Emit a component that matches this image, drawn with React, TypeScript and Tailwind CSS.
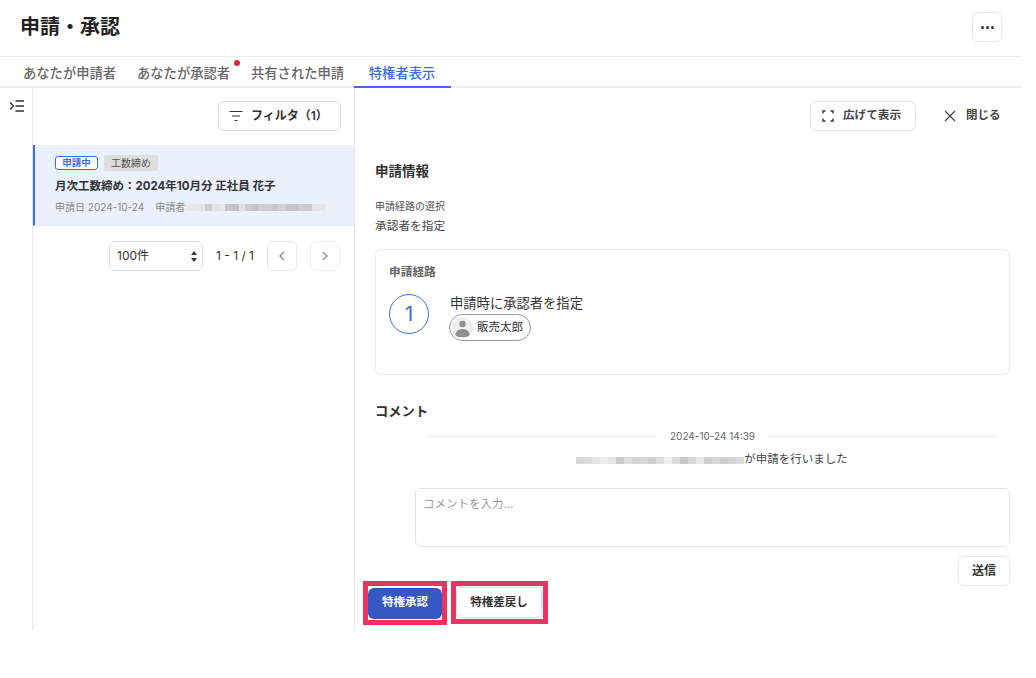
import React from "react";

const blurA = ["#e6e8ee","#e4e7ee","#dfe3ea","#c9ccd3","#dfe3ea","#e3e6ee","#c5c8d0","#c0c3cb","#dde0e8","#c8cbd2","#c2c5cd","#cdd0d8","#cbced5","#c6c9d1","#cfd2da","#c5c8d0","#c3c6ce","#cccfd6","#c8cbd3","#e0e3ea","#e4e7ee"];
const blurB = ["#d9d9d9","#dcdcdc","#e4e4e4","#ececec","#e6e6e6","#c9c9c9","#dedede","#d4d4d4","#d8d8d8","#cfcfcf","#dedede","#f0f0f0","#dcdcdc","#c8c8c8","#d8d8d8","#e8e8e8","#d0d0d0","#d8d8d8","#cccccc","#d4d4d4","#dcdcdc"];

function Blur({ colors, w, h = 7 }: { colors: string[]; w: number; h?: number }) {
  return (
    <span className="inline-flex shrink-0 blur-[0.6px]" style={{ width: w, height: h }}>
      {colors.map((c, i) => (
        <span key={i} className="flex-1" style={{ backgroundColor: c }} />
      ))}
    </span>
  );
}

function Chevron({ dir, color }: { dir: "l" | "r"; color: string }) {
  return (
    <svg width="12" height="12" viewBox="0 0 12 12" fill="none" stroke={color} strokeWidth="1.4">
      <path d={dir === "l" ? "M8 2 L4 6 L8 10" : "M4 2 L8 6 L4 10"} />
    </svg>
  );
}

export default function App() {
  return (
    <div className="w-[1036px] h-[678px] bg-white overflow-hidden text-[#333] font-['Inter','Noto_Sans_CJK_JP',sans-serif]">
      <div className="w-[1022px]">
        <header className="h-[57px] border-b border-[#eeeeee] flex items-center justify-between pl-5 pr-5">
          <h1 className="text-[20px] leading-7 font-bold text-[#222] -mt-[2px]">申請・承認</h1>
          <button className="w-[30px] h-[30px] mb-[2px] border border-[#e4e4e4] rounded-md flex items-center justify-center gap-[2px]">
            <span className="w-[3px] h-[3px] rounded-full bg-[#333]" />
            <span className="w-[3px] h-[3px] rounded-full bg-[#333]" />
            <span className="w-[3px] h-[3px] rounded-full bg-[#333]" />
          </button>
        </header>

        <nav className="h-[31px] border-b-2 border-[#eeeeee] flex pl-[23px] text-[13.3px] font-medium text-[#666]">
          <span className="leading-[32px] w-[114px]">あなたが申請者</span>
          <span className="leading-[32px] w-[114px] relative">
            あなたが承認者
            <span className="absolute left-[97px] top-[3px] w-[6px] h-[6px] rounded-full bg-[#d32f3a]" />
          </span>
          <span className="leading-[32px] w-[103px]">共有された申請</span>
          <span className="w-[97px] h-[31px] border-b-2 border-[#3b6ce8] text-[#3b6ce8] leading-[32px] text-center pr-[1px]">特権者表示</span>
        </nav>

        <div className="flex h-[542px]">
          <aside className="w-[33px] shrink-0 border-r border-[#e8e8e8] pl-[9px] pt-[12px]">
            <svg width="16" height="12" viewBox="0 0 16 12" fill="none" stroke="#333" strokeWidth="1.3">
              <path d="M1 2.5 L4.5 6 L1 9.5" />
              <path d="M6.5 1 H15 M6.5 6 H15 M6.5 11 H15" />
            </svg>
          </aside>

          <section className="w-[322px] shrink-0 border-r border-[#e8e8e8]">
            <div className="h-[57px] pt-[13px] pr-[13px] flex justify-end">
              <button className="w-[123px] h-[30px] border border-[#dddddd] rounded-md flex items-center pl-[10px] text-[12px] font-semibold text-[#333]">
                <svg width="14" height="12" viewBox="0 0 14 12" fill="none" stroke="#333" strokeWidth="1.2" className="mr-[8px]">
                  <path d="M0.5 1.5 H13.5 M3 6 H11 M5.5 10.5 H8.5" />
                </svg>
                フィルタ（1）
              </button>
            </div>
            <div className="h-[81px] bg-[#eaf1fd] border-l-2 border-[#3b6ce8] border-b border-b-[#e6e9f0] pl-[20px] pt-[10px]">
              <div className="flex items-center gap-[6px] h-[16px]">
                <span className="w-[43px] h-[14px] border border-[#3b6ce8] rounded-[3px] bg-white text-[#3b6ce8] text-[9.5px] font-semibold leading-[12px] text-center">申請中</span>
                <span className="w-[54px] h-[16px] bg-[#dedede] rounded-[2px] text-[#555] text-[10px] leading-[16px] text-center">工数締め</span>
              </div>
              <div className="mt-[5px] text-[11.5px] leading-[20px] font-bold text-[#333]">月次工数締め：2024年10月分 正社員 花子</div>
              <div className="mt-[3px] flex items-center text-[10px] leading-[16px] text-[#888]">
                <span>申請日 2024-10-24</span>
                <span className="ml-[11px]">申請者</span>
                <Blur colors={blurA} w={140} />
              </div>
            </div>
            <div className="flex items-center pt-[15px] pl-[76px]">
              <div className="w-[94px] h-[30px] border border-[#dddddd] rounded-md flex items-center justify-between pl-[7px] pr-[5px] text-[12px] text-[#333]">
                100件
                <svg width="6" height="11" viewBox="0 0 6 11" fill="#333"><path d="M3 0 L6 4 H0 Z M3 11 L0 7 H6 Z" /></svg>
              </div>
              <span className="ml-[13px] w-[38px] text-[12px] text-[#333] whitespace-nowrap">1 - 1 / 1</span>
              <button className="ml-[13px] w-[30px] h-[30px] border border-[#e8e8e8] rounded-md flex items-center justify-center"><Chevron dir="l" color="#888" /></button>
              <button className="ml-[13px] w-[30px] h-[30px] border border-[#eeeeee] rounded-md flex items-center justify-center"><Chevron dir="r" color="#999" /></button>
            </div>
          </section>

          <main className="flex-1 min-w-0 pl-[20px] pr-[12px] relative">
            <div className="h-[43px] pt-[13px] flex justify-end items-start">
              <button className="w-[106px] h-[30px] border border-[#e4e4e4] rounded-md flex items-center pl-[11px] text-[11.6px] font-semibold text-[#444]">
                <svg width="12" height="12" viewBox="0 0 12 12" fill="none" stroke="#333" strokeWidth="1.4" className="mr-[9px]">
                  <path d="M1 3.5 V1 H3.5 M8.5 1 H11 V3.5 M11 8.5 V11 H8.5 M3.5 11 H1 V8.5" />
                </svg>
                広げて表示
              </button>
              <div className="ml-[28px] mr-[10px] w-[56px] h-[30px] flex items-center text-[11.5px] font-semibold text-[#444] whitespace-nowrap">
                <svg width="12" height="12" viewBox="0 0 12 12" fill="none" stroke="#444" strokeWidth="1.2" className="mr-[10px] shrink-0">
                  <path d="M1 1 L11 11 M11 1 L1 11" />
                </svg>
                閉じる
              </div>
            </div>

            <h2 className="mt-[30px] text-[13.5px] leading-5 font-bold text-[#333]">申請情報</h2>
            <p className="mt-[17px] text-[10px] leading-4 text-[#555]">申請経路の選択</p>
            <p className="mt-[2px] text-[11.7px] leading-5 text-[#444]">承認者を指定</p>

            <div className="mt-[13px] h-[126px] border border-[#e9e9e9] rounded-md pl-[13px] pt-[12px]">
              <div className="text-[11.7px] leading-5 font-semibold text-[#666]">申請経路</div>
              <div className="mt-[12px] flex">
                <div className="w-[40px] h-[40px] rounded-full border border-[#3b6ce8] text-[#3b6ce8] text-[20px] flex items-center justify-center">1</div>
                <div className="ml-[20px] -mt-[1px]">
                  <div className="text-[13.3px] leading-5 text-[#333] pl-[1px]">申請時に承認者を指定</div>
                  <div className="w-[82px] h-[27px] mt-[1px] rounded-full border border-[#999] flex items-center pl-[2px]">
                    <span className="w-[21px] h-[21px] rounded-full bg-[#eeeeee] overflow-hidden flex items-center justify-center">
                      <svg width="21" height="21" viewBox="0 0 21 21" fill="#8f8f8f">
                        <circle cx="10.5" cy="7" r="3.2" />
                        <path d="M3 20 C3 14 7 12 10.5 12 C14 12 18 14 18 20 Z" />
                      </svg>
                    </span>
                    <span className="ml-[4px] text-[11.5px] text-[#333]">販売太郎</span>
                  </div>
                </div>
              </div>
            </div>

            <h2 className="mt-[26px] text-[13.3px] leading-5 font-bold text-[#333]">コメント</h2>
            <div className="mt-[5px] ml-[53px] mr-[13px] flex items-center h-[20px]">
              <span className="flex-1 h-px bg-[#ececec]" />
              <span className="mx-[13px] text-[10px] text-[#666]">2024-10-24 14:39</span>
              <span className="flex-1 h-px bg-[#ececec]" />
            </div>
            <div className="mt-[4px] h-[20px] flex items-center justify-center text-[11.5px] text-[#444] pl-[39px]">
              <Blur colors={blurB} w={168} />
              <span>が申請を行いました</span>
            </div>
            <div className="mt-[18px] ml-[40px] h-[59px] border border-[#e2e2e2] rounded-md pl-[7px] pt-[5px] text-[11.5px] leading-5 text-[#999]">コメントを入力...</div>
            <div className="mt-[9px] flex justify-end h-[30px]">
              <button className="w-[52px] h-[30px] border border-[#e4e4e4] rounded-md text-[12px] font-semibold text-[#333]">送信</button>
            </div>

            <div className="absolute left-[8px] top-[493px] flex items-start gap-[4px]">
              <div className="w-[84px] h-[44px] border-[5px] border-[#ee3362] bg-white flex items-center justify-center">
                <button className="w-[74px] h-[31px] bg-[#3558c4] rounded-md text-white text-[11.5px] font-semibold">特権承認</button>
              </div>
              <div className="w-[97px] h-[43px] border-[5px] border-[#ee3362] bg-white flex items-center justify-start">
                <button className="w-[86px] h-[31px] border border-[#dcdcdc] rounded-md text-[#333] text-[11.5px] font-semibold">特権差戻し</button>
              </div>
            </div>
          </main>
        </div>
      </div>
    </div>
  );
}
